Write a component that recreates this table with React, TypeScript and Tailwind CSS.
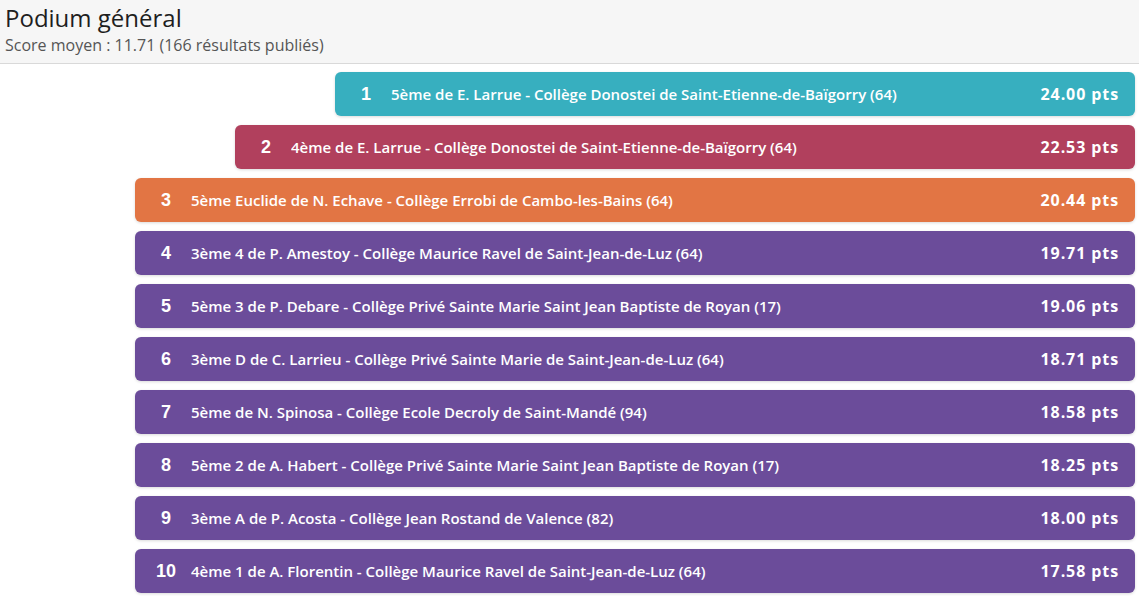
import React from 'react';

type Entry = { rank: number; label: string; score: string };

const entries: Entry[] = [
  { rank: 1, label: "5ème de E. Larrue - Collège Donostei de Saint-Etienne-de-Baïgorry (64)", score: "24.00" },
  { rank: 2, label: "4ème de E. Larrue - Collège Donostei de Saint-Etienne-de-Baïgorry (64)", score: "22.53" },
  { rank: 3, label: "5ème Euclide de N. Echave - Collège Errobi de Cambo-les-Bains (64)", score: "20.44" },
  { rank: 4, label: "3ème 4 de P. Amestoy - Collège Maurice Ravel de Saint-Jean-de-Luz (64)", score: "19.71" },
  { rank: 5, label: "5ème 3 de P. Debare - Collège Privé Sainte Marie Saint Jean Baptiste de Royan (17)", score: "19.06" },
  { rank: 6, label: "3ème D de C. Larrieu - Collège Privé Sainte Marie de Saint-Jean-de-Luz (64)", score: "18.71" },
  { rank: 7, label: "5ème de N. Spinosa - Collège Ecole Decroly de Saint-Mandé (94)", score: "18.58" },
  { rank: 8, label: "5ème 2 de A. Habert - Collège Privé Sainte Marie Saint Jean Baptiste de Royan (17)", score: "18.25" },
  { rank: 9, label: "3ème A de P. Acosta - Collège Jean Rostand de Valence (82)", score: "18.00" },
  { rank: 10, label: "4ème 1 de A. Florentin - Collège Maurice Ravel de Saint-Jean-de-Luz (64)", score: "17.58" },
];

const rowStyle = (rank: number) => {
  switch (rank) {
    case 1: return 'ml-[200px] bg-[#37afbf]';
    case 2: return 'ml-[100px] bg-[#b1405d]';
    case 3: return 'bg-[#e27544]';
    default: return 'bg-[#6b4c9a]';
  }
};

const App = () => {
  return (
    <div className="min-h-screen bg-white font-['Open_Sans',sans-serif]">
      {/* Header */}
      <div className="h-[64px] bg-[#f6f6f6] border-b border-[#d9d9d9] px-[5px] pt-[2px]">
        <h1 className="text-[24px] leading-[32px] text-[#1e1e1e]">Podium général</h1>
        <p className="text-[16px] leading-[22px] text-[#555]">Score moyen : 11.71 (166 résultats publiés)</p>
      </div>

      {/* Podium list */}
      <div className="pl-[135px] pr-[4px] pt-[8px] flex flex-col gap-[9px]">
        {entries.map((e) => (
          <div
            key={e.rank}
            className={`${rowStyle(e.rank)} h-[44px] rounded-[6px] shadow-[0_1px_3px_rgba(0,0,0,0.15)] flex items-center pl-[6px] pr-[16px] text-white`}
          >
            <span className="w-[50px] text-center text-[18px] font-bold font-['Liberation_Sans',sans-serif]">{e.rank}</span>
            <span className="flex-1 text-[15px] font-semibold truncate">{e.label}</span>
            <span className="text-[16px] font-bold tracking-[0.9px]">{e.score} pts</span>
          </div>
        ))}
      </div>
    </div>
  );
};

export default App;
